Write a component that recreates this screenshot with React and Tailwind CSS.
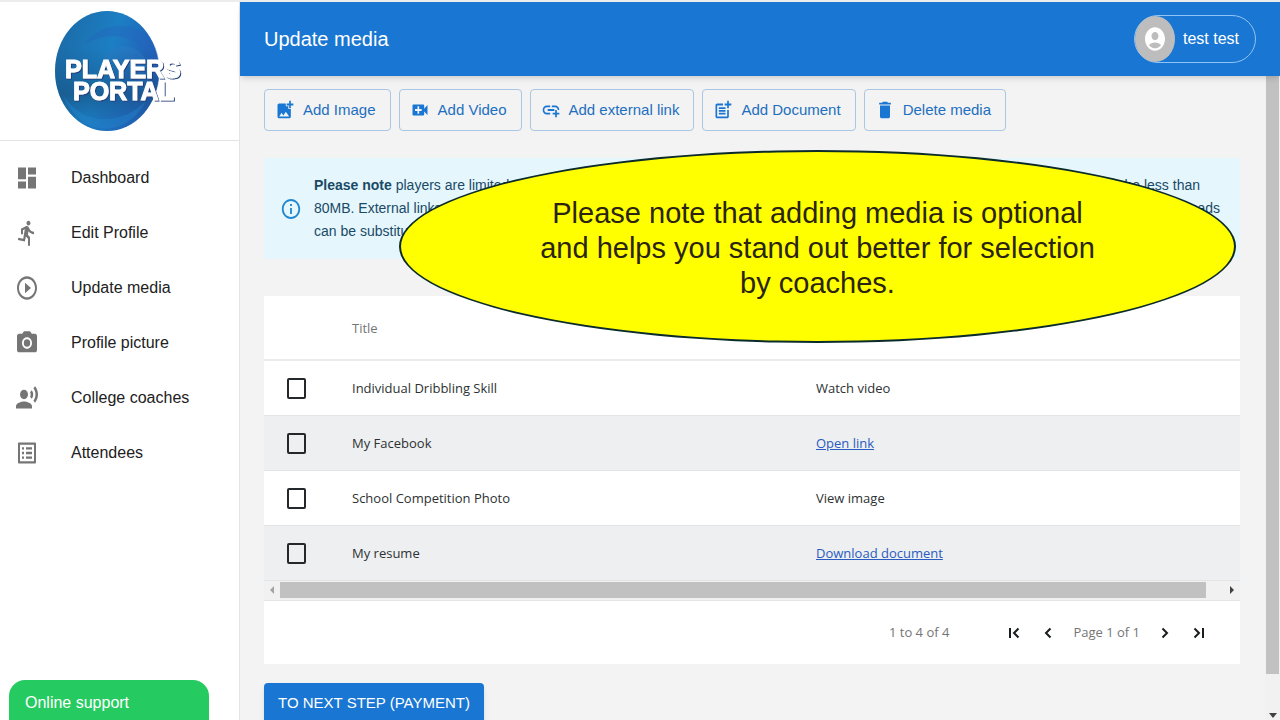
import {
  MdAccountCircle,
  MdAddLink,
  MdAddPhotoAlternate,
  MdDashboard,
  MdDelete,
  MdDirectionsRun,
  MdInfoOutline,
  MdListAlt,
  MdPhotoCamera,
  MdPlayCircleOutline,
  MdPostAdd,
  MdRecordVoiceOver,
  MdVideoCall,
} from 'react-icons/md';

const NAV = [
  { label: 'Dashboard', icon: MdDashboard },
  { label: 'Edit Profile', icon: MdDirectionsRun },
  { label: 'Update media', icon: MdPlayCircleOutline },
  { label: 'Profile picture', icon: MdPhotoCamera },
  { label: 'College coaches', icon: MdRecordVoiceOver },
  { label: 'Attendees', icon: MdListAlt },
];

const ACTIONS = [
  { label: 'Add Image', icon: MdAddPhotoAlternate },
  { label: 'Add Video', icon: MdVideoCall },
  { label: 'Add external link', icon: MdAddLink },
  { label: 'Add Document', icon: MdPostAdd },
  { label: 'Delete media', icon: MdDelete },
];

const MEDIA = [
  { title: 'Individual Dribbling Skill', action: 'Watch video' },
  { title: 'My Facebook', action: 'Open link', link: true },
  { title: 'School Competition Photo', action: 'View image' },
  { title: 'My resume', action: 'Download document', link: true },
];

const PAGER_PATHS = {
  first: 'M2 1v10M10.500 1.500 6 6l4.500 4.500',
  prev: 'M8.500 1.500 4 6l4.500 4.500',
  next: 'M3.500 1.500 8 6l-4.500 4.500',
  last: 'M1.500 1.500 6 6 1.500 10.500M10 1v10',
};

function Logo() {
  return (
    <svg viewBox="0 0 140 124" className="h-[124px] w-[140px]" role="img" aria-label="Players Portal">
      <defs>
        <linearGradient id="ball" x1="0" y1="0.2" x2="1" y2="0.6">
          <stop offset="0" stopColor="#1c6aa6" />
          <stop offset="0.5" stopColor="#1c7fc4" />
          <stop offset="1" stopColor="#2456b4" />
        </linearGradient>
        <linearGradient id="shade" x1="0" y1="0" x2="0" y2="1">
          <stop offset="0.3" stopColor="#164f7c" stopOpacity="0" />
          <stop offset="0.7" stopColor="#164f7c" stopOpacity="0.6" />
          <stop offset="1" stopColor="#1b74b8" stopOpacity="0.2" />
        </linearGradient>
        <filter id="edge" x="-5%" y="-10%" width="115%" height="125%">
          <feDropShadow dx="1" dy="1" stdDeviation="0.4" floodColor="#1f3f80" />
        </filter>
      </defs>
      <ellipse cx="57" cy="62" rx="52" ry="60" fill="url(#ball)" />
      <path d="M34 36C48 14 82 10 99 28c14 16 14 48 2 66 4-30-2-56-22-64-16-6-34-2-45 6z" fill="#2563bd" opacity="0.4" />
      <path d="M52 52c8-18 32-20 42-4 8 14 6 34-2 46 0-24-8-44-40-42z" fill="#2f80c9" opacity="0.4" />
      <ellipse cx="57" cy="62" rx="52" ry="60" fill="url(#shade)" />
      <path d="M12 84c16 30 56 36 84 8-20 38-66 38-84-8z" fill="#2388cf" opacity="0.4" />
      <g
        fontFamily="Liberation Sans, Arial, sans-serif"
        fontWeight="700"
        fontSize="25"
        fill="#fff"
        stroke="#fff"
        strokeWidth="1"
        filter="url(#edge)"
      >
        <text x="15" y="69">PLAYERS</text>
        <text x="23" y="91">PORTAL</text>
      </g>
    </svg>
  );
}

function Sidebar() {
  return (
    <aside className="flex w-60 shrink-0 flex-col border-r border-[#e4e4e4] bg-white">
      <div className="flex h-[139px] shrink-0 items-center justify-center border-b border-[#e4e4e4]">
        <Logo />
      </div>
      <nav className="flex flex-col pt-[9px]">
        {NAV.map(({ label, icon: Icon }) => (
          <a key={label} href="#" className="flex h-[55px] items-center gap-8 pl-[15px] text-base text-[#212121]">
            <Icon preserveAspectRatio="none" className="h-7 w-6 text-[#757575]" />
            {label}
          </a>
        ))}
      </nav>
      <button type="button" className="mx-[9px] mt-auto h-10 w-[200px] rounded-t-2xl bg-[#25ca60] px-4 pt-1.5 text-left text-base text-white">
        Online support
      </button>
    </aside>
  );
}

function Header() {
  return (
    <header className="relative z-10 flex h-[74px] shrink-0 items-center justify-between bg-[#1976d2] px-6 text-white shadow-md">
      <h1 className="text-xl">Update media</h1>
      <button type="button" className="flex h-12 items-center gap-2 rounded-full border border-[#8fc4f5] pr-4 text-base">
        <span className="flex h-full w-10 items-center justify-center rounded-[50%] bg-[#bdbdbd]">
          <MdAccountCircle preserveAspectRatio="none" className="h-7 w-6" />
        </span>
        test test
      </button>
    </header>
  );
}

function Notice() {
  return (
    <div className="mt-[27px] flex items-center gap-3 bg-[#e5f6fd] px-4 py-4 text-sm leading-[23px] text-[#1a4a66]">
      <MdInfoOutline preserveAspectRatio="none" className="h-6 w-[22px] shrink-0 text-[#2188d0]" />
      <div className="min-w-0 flex-1">
        <p className="flex justify-between pr-6">
          <span><b>Please note</b> players are limited</span>
          <span>be less than</span>
        </p>
        <p className="flex justify-between pr-1">
          <span>80MB. External links</span>
          <span>uploads</span>
        </p>
        <p>can be substituted</p>
      </div>
    </div>
  );
}

function PagerButton({ name, label }) {
  return (
    <button type="button" aria-label={label}>
      <svg viewBox="0 0 12 12" className="h-3 w-3" fill="none" stroke="#181d1f" strokeWidth="2">
        <path d={PAGER_PATHS[name]} />
      </svg>
    </button>
  );
}

function MediaGrid() {
  return (
    <section className="mt-[37px] bg-white font-['Open_Sans','Noto_Sans',sans-serif] text-[13px] text-[#2d3133]">
      <table className="w-full table-fixed border-collapse text-left">
        <thead>
          <tr className="h-16 border-b-2 border-[#ebebeb] text-[#757575]">
            <th className="w-[88px]" aria-label="Select" />
            <th className="w-[464px] pt-0.5 font-normal">Title</th>
            <th aria-label="Action" />
          </tr>
        </thead>
        <tbody>
          {MEDIA.map((row) => (
            <tr key={row.title} className="h-[55px] border-b border-[#e2e4e6] even:bg-[#eeeff1]">
              <td className="pt-0.5 pl-[23px]">
                <input
                  type="checkbox"
                  aria-label={row.title}
                  className="block h-[21px] w-[19px] appearance-none rounded-xs border-2 border-[#24282a]"
                />
              </td>
              <td className="pt-0.5">{row.title}</td>
              <td className="pt-0.5">
                {row.link ? <a href="#" className="text-[#2a5bc0] underline">{row.action}</a> : row.action}
              </td>
            </tr>
          ))}
        </tbody>
      </table>
      {/* horizontal scroll bar of the grid */}
      <div className="flex h-5 items-center justify-between border-b border-[#e2e4e6] bg-[#f1f1f1] px-1.5">
        <svg viewBox="0 0 4 8" className="h-2 w-1" fill="#a3a3a3"><path d="M4 0v8L0 4z" /></svg>
        <div className="mr-6 ml-1.5 h-4 flex-1 bg-[#c1c1c1]" />
        <svg viewBox="0 0 4 8" className="h-2 w-1" fill="#404040"><path d="M0 0v8l4-4z" /></svg>
      </div>
      <div className="flex h-[63px] items-center justify-end pt-0.5 pr-[35px] text-[#757575]">
        <span className="mr-[59px]">1 to 4 of 4</span>
        <div className="flex items-center gap-[19px]">
          <div className="flex gap-[22px]">
            <PagerButton name="first" label="First page" />
            <PagerButton name="prev" label="Previous page" />
          </div>
          <span>Page 1 of 1</span>
          <div className="flex gap-[22px]">
            <PagerButton name="next" label="Next page" />
            <PagerButton name="last" label="Last page" />
          </div>
        </div>
      </div>
    </section>
  );
}

export default function App() {
  return (
    <div className="flex h-screen overflow-hidden border-t-2 border-[#ececec] bg-[#f3f3f3] font-['Liberation_Sans',Arial,sans-serif]">
      <Sidebar />
      <div className="flex min-w-0 flex-1 flex-col">
        <Header />
        <div className="flex min-h-0 flex-1">
          <main className="relative min-w-0 flex-1 overflow-hidden pr-[25px] pl-6">
            <div className="flex gap-2 pt-[13px]">
              {ACTIONS.map(({ label, icon: Icon }) => (
                <button
                  key={label}
                  type="button"
                  className="flex h-[42px] items-center gap-2 rounded border border-[#a9c6e4] pr-[14px] pl-[10px] text-[15px] whitespace-nowrap text-[#1d6fbf]"
                >
                  <Icon preserveAspectRatio="none" className="h-[22px] w-5 text-[#1976d2]" />
                  {label}
                </button>
              ))}
            </div>
            <Notice />
            <MediaGrid />
            <button type="button" className="mt-[19px] h-[42px] rounded bg-[#1976d2] px-[14px] text-[15px] text-white shadow-md">
              TO NEXT STEP (PAYMENT)
            </button>

            {/* callout lying over the page */}
            <div className="absolute top-[74px] right-[29px] left-[159px] flex h-[193px] items-center justify-center rounded-[50%] border-2 border-[#0b2b2b] bg-[#ffff00] pt-1 text-center text-[29px] leading-[35px] text-[#2a2410]">
              <p>
                Please note that adding media is optional
                <br />
                and helps you stand out better for selection
                <br />
                by coaches.
              </p>
            </div>
          </main>
          {/* vertical scroll bar of the page */}
          <div className="flex w-[15px] shrink-0 flex-col items-center bg-[#f1f1f1]">
            <div className="w-[13px] flex-1 bg-[#c1c1c1]" />
            <div className="flex h-[46px] items-end pb-0.5">
              <svg viewBox="0 0 8 5" className="h-[5px] w-2" fill="#404040"><path d="M0 0h8L4 5z" /></svg>
            </div>
          </div>
        </div>
      </div>
    </div>
  );
}
